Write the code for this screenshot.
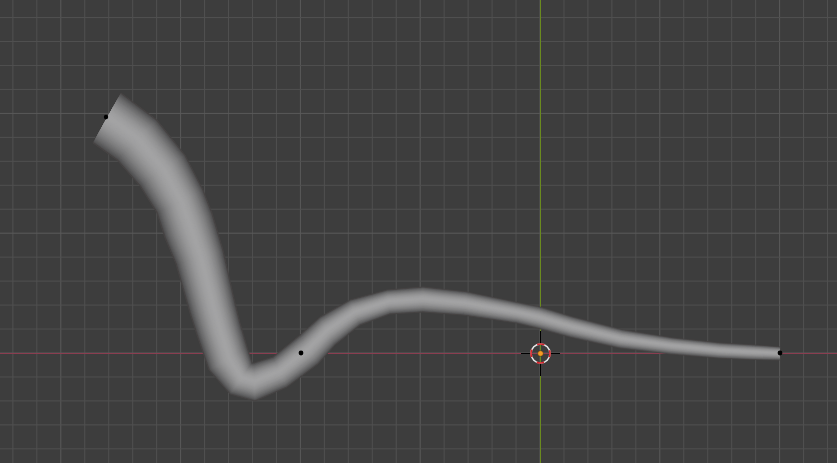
const SECTIONS: number[][] = [
  [121, 93, 93, 143],
  [157, 120, 117, 160],
  [185, 155, 140, 186],
  [203, 190, 157, 213],
  [212, 213, 165, 238],
  [223, 250, 176, 264],
  [235, 303, 190, 313],
  [240, 323, 197, 335],
  [247, 347, 209, 370],
  [252, 363, 230, 394],
  [254, 363, 255, 401],
  [273, 357, 287, 387],
  [300, 335, 318, 364],
  [320, 317, 335, 345],
  [350, 300, 360, 325],
  [387, 290, 390, 314],
  [423, 287, 423, 312],
  [467, 292, 463, 315],
  [520, 303, 517, 323],
  [540, 307, 537, 328],
  [573, 317, 570, 337],
  [623, 330, 620, 348],
  [673, 338, 671, 354],
  [720, 343, 719, 358],
  [753, 345, 753, 359.5],
  [780, 347, 780, 360],
];

const LAYERS = 28;
const CENTER = 0.47;

function layerPoints(k: number) {
  // k = 0 at the silhouette, 1 at the brightest line
  const a = k * CENTER;
  const b = 1 - k * (1 - CENTER);
  const top = SECTIONS.map(([x1, y1, x2, y2]) => `${x1 + (x2 - x1) * a},${y1 + (y2 - y1) * a}`);
  const bottom = SECTIONS.map(([x1, y1, x2, y2]) => `${x1 + (x2 - x1) * b},${y1 + (y2 - y1) * b}`).reverse();
  return [...top, ...bottom].join(" ");
}

function layerColor(k: number) {
  const v = Math.round(72 + (163 - 72) * Math.pow(Math.sin((k * Math.PI) / 2), 0.8));
  return `rgb(${v},${v},${v + 1})`;
}

const STEP = 23.96;
const xLines = Array.from({ length: 36 }, (_, i) => 540 + (i - 22) * STEP);
const yLines = Array.from({ length: 20 }, (_, i) => 353 + (i - 14) * STEP);

function Viewport() {
  return (
    <svg width={837} height={463} viewBox="0 0 837 463" className="block">
      {xLines.map((x, i) => (
        <line key={`v${i}`} x1={x} y1={0} x2={x} y2={463} stroke={(i - 22) % 5 === 0 ? "#5a5a5a" : "#505050"} strokeWidth={1} />
      ))}
      {yLines.map((y, i) => (
        <line key={`h${i}`} x1={0} y1={y} x2={837} y2={y} stroke={(i - 14) % 5 === 0 ? "#5a5a5a" : "#505050"} strokeWidth={1} />
      ))}
      <line x1={0} y1={353.5} x2={837} y2={353.5} stroke="#8b3d50" strokeWidth={1} />
      <line x1={540.5} y1={0} x2={540.5} y2={463} stroke="#6a8a1e" strokeWidth={1} />

      <polygon points={layerPoints(0)} fill="#474444" stroke="#474444" strokeWidth={1} strokeLinejoin="round" />
      {Array.from({ length: LAYERS }, (_, i) => {
        const k = (i + 1) / (LAYERS + 1);
        return <polygon key={i} points={layerPoints(k)} fill={layerColor(k)} />;
      })}

      <circle cx={106} cy={117} r={2.2} fill="#000" />
      <circle cx={301} cy={353} r={2.4} fill="#000" />
      <circle cx={780} cy={353} r={2.4} fill="#000" />

      <g>
        <line x1={540.5} y1={331} x2={540.5} y2={345} stroke="#000" strokeWidth={1} />
        <line x1={540.5} y1={362} x2={540.5} y2={376} stroke="#000" strokeWidth={1} />
        <line x1={521} y1={353.5} x2={532} y2={353.5} stroke="#000" strokeWidth={1} />
        <line x1={549} y1={353.5} x2={560} y2={353.5} stroke="#000" strokeWidth={1} />
        <circle cx={540.5} cy={353.5} r={9.5} fill="none" stroke="#e8e8e8" strokeWidth={1.6} />
        <circle cx={540.5} cy={353.5} r={9.5} fill="none" stroke="#d8232a" strokeWidth={1.6} strokeDasharray="7.46 7.46" strokeDashoffset={3.7} />
        <circle cx={540.5} cy={353.5} r={2.8} fill="#f59a23" stroke="#3a2a10" strokeWidth={0.5} />
      </g>
    </svg>
  );
}

export default function App() {
  return (
    <div className="w-[837px] h-[463px] overflow-hidden bg-[#3d3d3d]">
      <Viewport />
    </div>
  );
}
